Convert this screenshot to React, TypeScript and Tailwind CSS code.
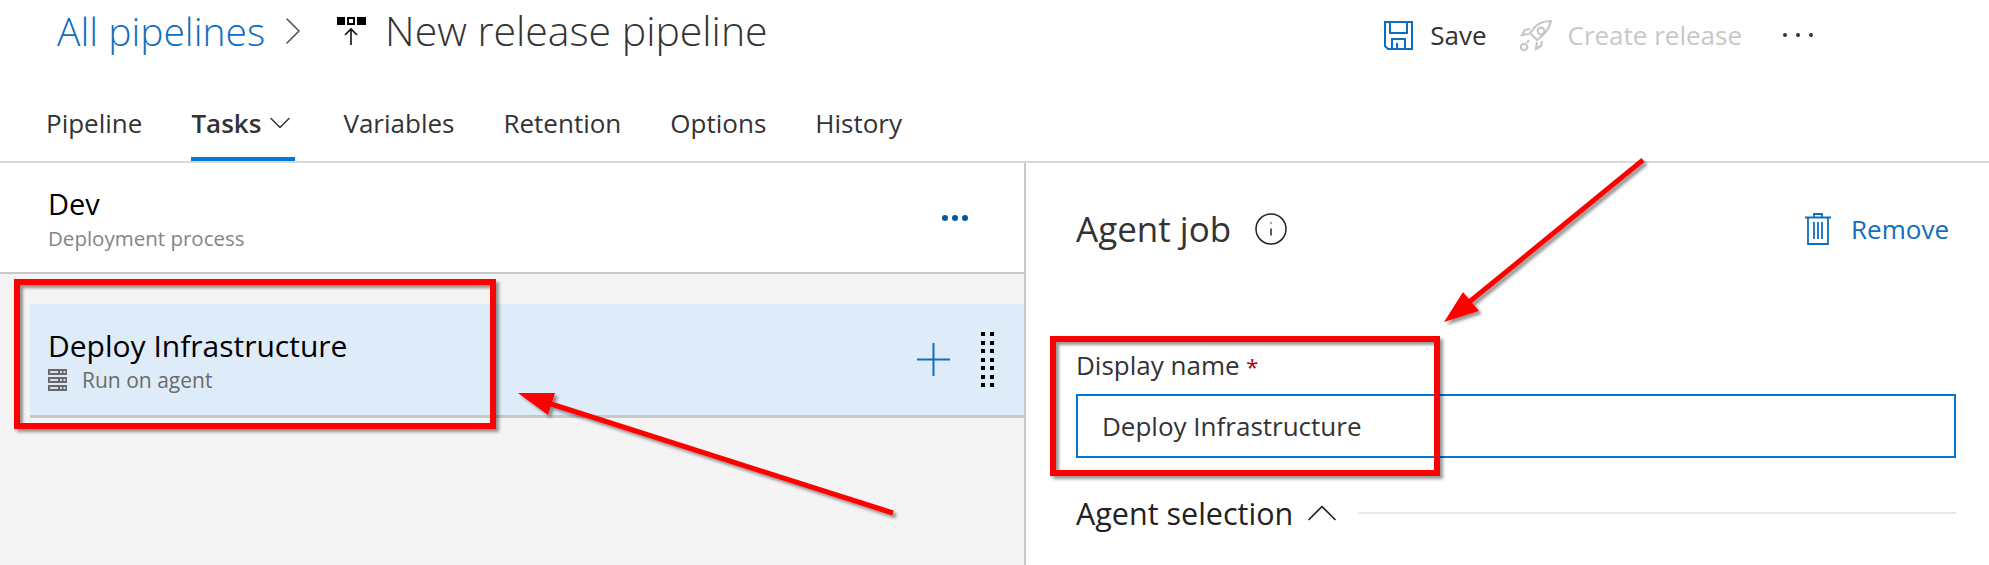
import { ChevronRight, ChevronDown, ChevronUp, Info } from 'lucide-react';

const Gripper = () => (
  <div className="grid grid-cols-2 gap-x-[5px] gap-y-[4.5px]">
    {Array.from({ length: 14 }).map((_, i) => (
      <div key={i} className="h-1 w-1 bg-black" />
    ))}
  </div>
);

const ReleaseIcon = () => (
  <svg width="30" height="30" viewBox="0 0 30 30" className="mr-[18px]">
    <rect x="0" y="1" width="8" height="8" fill="#000" />
    <rect x="11" y="2" width="6" height="6" fill="#fff" stroke="#000" strokeWidth="2" />
    <rect x="20" y="1" width="9" height="8" fill="#000" />
    <path d="M14 29V13M8 19l6-6 6 6" fill="none" stroke="#111" strokeWidth="1.6" />
  </svg>
);

const SaveIcon = () => (
  <svg width="29" height="29" viewBox="0 0 29 29" fill="none" stroke="#106ebe" strokeWidth="2">
    <path d="M1 1h27v27H4l-3-3z" />
    <path d="M6 1v11h17V1" />
    <path d="M8 28v-10h13v10M13 28v-6" />
  </svg>
);

const RocketIcon = () => (
  <svg width="34" height="33" viewBox="0 0 34 33" fill="none" stroke="#c8c8c8" strokeWidth="2.2">
    <path d="M32 2c-7 0-12 2-16 6l-5 6 7 7 6-5c4-4 7-9 8-14z" />
    <circle cx="22" cy="12" r="3.4" />
    <path d="M11 10l-5 1-3 5 7-1M23 22l-1 5-5 3 1-7" />
    <circle cx="5" cy="28" r="3.2" />
    <path d="M10 21l-2 3" />
  </svg>
);

const ServerIcon = () => (
  <svg width="19" height="22" viewBox="0 0 19 22" className="mr-[15px]">
    {[0, 8, 16].map((y) => (
      <g key={y}>
        <rect x="0" y={y} width="19" height="6" fill="#69696b" />
        <rect x="2" y={y + 2} width="8" height="2" fill="#d5dde6" />
        <rect x="12" y={y + 2} width="2" height="2" fill="#d5dde6" />
        <rect x="15.5" y={y + 2} width="2" height="2" fill="#d5dde6" />
      </g>
    ))}
  </svg>
);

const TrashIcon = () => (
  <svg width="26" height="32" viewBox="0 0 26 32" fill="none" stroke="#106ebe" strokeWidth="1.8">
    <path d="M0 4.5h26M9 4.5V1h8v3.5M3 4.5V31h20V4.5" />
    <path d="M9 9v17M13 9v17M17 9v17" />
  </svg>
);

const Annotations = () => (
  <>
    <div className="pointer-events-none absolute left-[14px] top-[279px] h-[150px] w-[482px] border-[6px] border-[#ff0000] shadow-[3px_3px_3px_rgba(0,0,0,0.4),inset_3px_3px_3px_rgba(0,0,0,0.4)]" />
    <div className="pointer-events-none absolute left-[1050px] top-[336px] h-[140px] w-[390px] border-[6px] border-[#ff0000] shadow-[3px_3px_3px_rgba(0,0,0,0.4),inset_3px_3px_3px_rgba(0,0,0,0.4)]" />
    <svg width="1989" height="565" className="pointer-events-none absolute left-0 top-0">
      <defs>
        <filter id="arrowShadow" x="-10%" y="-10%" width="120%" height="120%">
          <feDropShadow dx="3" dy="3" stdDeviation="1.5" floodColor="#000" floodOpacity="0.4" />
        </filter>
      </defs>
      <g filter="url(#arrowShadow)" fill="#ff0000">
        <path d="M893 513L548 403" stroke="#ff0000" strokeWidth="5" />
        <path d="M518 393L555 393L548 415z" />
        <path d="M1643 160L1468 303" stroke="#ff0000" strokeWidth="5" />
        <path d="M1444 322L1463 292L1479 311z" />
      </g>
    </svg>
  </>
);

export default function App() {
  return (
    <div className="relative h-[565px] w-[1989px] overflow-hidden bg-white font-['Open_Sans',sans-serif]">
      {/* top bar */}
      <div className="flex h-[62px] items-center pl-[57px] pr-[176px]">
        <span className="text-[39px] font-light text-[#106ebe]">All pipelines</span>
        <ChevronRight size={48} strokeWidth={0.8} className="ml-[4px] mr-[20px] text-[#555]" />
        <ReleaseIcon />
        <span className="text-[41px] font-light text-[#333]">New release pipeline</span>
        <div className="ml-auto mt-[8px] flex items-center">
          <SaveIcon />
          <span className="ml-[17px] text-[26px] text-[#333]">Save</span>
          <div className="ml-[32px]">
            <RocketIcon />
          </div>
          <span className="ml-[15px] text-[26px] text-[#c8c8c8]">Create release</span>
          <div className="ml-[41px] flex gap-[9px]">
            <div className="h-1 w-1 rounded-full bg-[#333]" />
            <div className="h-1 w-1 rounded-full bg-[#333]" />
            <div className="h-1 w-1 rounded-full bg-[#333]" />
          </div>
        </div>
      </div>

      {/* tabs */}
      <div className="flex h-[101px] items-end border-b-2 border-[#d8d8d8] pl-[46px] text-[26px] text-[#333]">
        <div className="mr-[49px] flex h-[57px] items-start">Pipeline</div>
        <div className="mr-[48px] flex h-[57px] w-[104px] items-start border-b-4 border-[#0078d4] font-semibold">
          Tasks
          <ChevronDown size={36} strokeWidth={1} className="ml-[1px] mt-[1px] shrink-0" />
        </div>
        <div className="mr-[49px] flex h-[57px] items-start">Variables</div>
        <div className="mr-[49px] flex h-[57px] items-start">Retention</div>
        <div className="mr-[49px] flex h-[57px] items-start">Options</div>
        <div className="flex h-[57px] items-start">History</div>
      </div>

      <div className="flex h-[402px]">
        {/* left panel */}
        <div className="flex w-[1026px] flex-col border-r-2 border-[#c8c8c8] bg-[#f4f4f4]">
          <div className="flex h-[111px] items-center justify-between border-b-2 border-[#c8c8c8] bg-white pl-[48px] pr-[56px]">
            <div className="flex flex-col">
              <span className="text-[29px] leading-[40px] text-black">Dev</span>
              <span className="text-[20.5px] leading-[28px] text-[#858585]">Deployment process</span>
            </div>
            <div className="flex gap-[4px]">
              <div className="h-[6px] w-[6px] rounded-full bg-[#005a9e]" />
              <div className="h-[6px] w-[6px] rounded-full bg-[#005a9e]" />
              <div className="h-[6px] w-[6px] rounded-full bg-[#005a9e]" />
            </div>
          </div>
          <div className="ml-[30px] mt-[30px] flex h-[114px] items-center border-b-[3px] border-[#c8c8c8] bg-[#deebf8] pl-[18px] pr-[30px]">
            <div className="flex flex-col">
              <span className="text-[30px] leading-[40px] text-black">Deploy Infrastructure</span>
              <div className="flex items-center">
                <ServerIcon />
                <span className="text-[21px] leading-[28px] text-[#6b6b6b]">Run on agent</span>
              </div>
            </div>
            <div className="ml-auto flex items-center">
              <svg width="33" height="33" viewBox="0 0 33 33" className="mr-[31px]" stroke="#106ebe" strokeWidth="2">
                <path d="M16.5 0v33M0 16.5h33" />
              </svg>
              <Gripper />
            </div>
          </div>
        </div>

        {/* right panel */}
        <div className="flex-1 pl-[50px] pr-[33px]">
          <div className="flex h-[132px] items-center">
            <span className="text-[35px] text-[#333]">Agent job</span>
            <Info size={36} strokeWidth={1} className="ml-[22px] text-[#222]" />
            <div className="ml-auto flex items-center pr-[7px] text-[#106ebe]">
              <TrashIcon />
              <span className="ml-[20px] text-[26px]">Remove</span>
            </div>
          </div>
          <div className="mt-[55px] text-[26px] leading-[30px] text-[#333]">
            Display name <span className="text-[22px] text-[#a80000]">*</span>
          </div>
          <div className="mt-[13px] flex h-[64px] items-center border-2 border-[#0078d4] pl-[24px] text-[26px] text-[#333]">
            Deploy Infrastructure
          </div>
          <div className="mt-[25px] flex items-center">
            <span className="text-[30.5px] leading-[60px] text-[#222]">Agent selection</span>
            <ChevronUp size={52} strokeWidth={0.8} className="ml-[3px] text-[#222]" />
            <div className="ml-[10px] h-[2px] flex-1 bg-[#e8e8e8]" />
          </div>
        </div>
      </div>

      <Annotations />
    </div>
  );
}
